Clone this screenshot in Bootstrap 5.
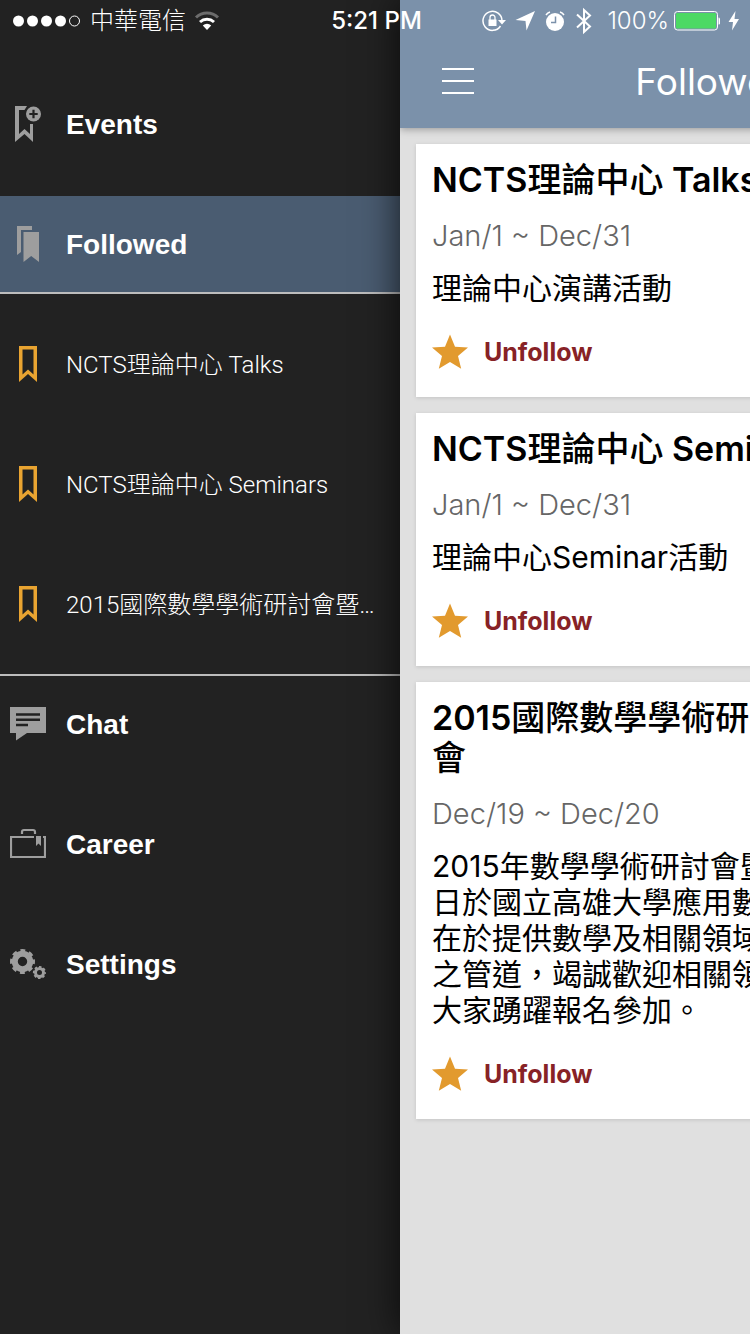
<!DOCTYPE html>
<html lang="zh-Hant">
<head>
<meta charset="utf-8">
<meta name="viewport" content="width=device-width, initial-scale=1">
<title>Followed Events</title>
<link href="https://cdn.jsdelivr.net/npm/bootstrap@5.3.0/dist/css/bootstrap.min.css" rel="stylesheet">
<style>
  body { font-family: Inter, "Noto Sans CJK TC", sans-serif; background: #222; }
  svg { display: block; flex: none; }
  .status-bar { height: 42px; font-size: 24px; line-height: 42px; padding: 0 9px 0 12px; z-index: 5; }
  .status-side { flex: 1 1 0; font-weight: 300; }
  .status-bar time { font-weight: 500; }
  .charge-level { margin: 0 5px 0 13px; }
  .side-menu { width: 400px; padding-top: 76px; }
  .menu-row { height: 96px; padding: 0 16px 0 10px; gap: 20px; color: #fff; text-decoration: none; }
  .menu-row span { padding-top: 2px; }
  .menu-main { font: 700 28px "Liberation Sans", sans-serif; }
  .menu-sub { font-family: Roboto, "Noto Sans CJK TC", sans-serif; font-size: 24px; font-weight: 300; }
  .menu-row.active { background: #4a5c71; }
  .menu-row svg { color: #9e9e9e; }
  .menu-sub svg { color: #e9a431; }
  .menu-gap { gap: 24px; }
  .followed-list { border-top: 2px solid #bdbdbd; border-bottom: 2px solid #bdbdbd; padding: 22px 0; }
  .main-pane { min-width: 0; background: #e0e0e0; box-shadow: 0 0 36px rgba(0,0,0,.75); }
  .pane-inner { width: 100vw; }
  .top-bar { height: 128px; padding: 57px 32px 0; background: #7b91aa; box-shadow: 0 1px 8px rgba(0,0,0,.35); }
  .top-bar h1 { font-size: 37px; line-height: 50px; font-weight: 400; }
  .menu-btn { width: 52px; height: 48px; padding: 0 10px; }
  .event-card { border: 0; border-radius: 0; padding: 16px 16px 27px; box-shadow: 0 1px 4px rgba(0,0,0,.13); color: #000; }
  .event-card h2 { font-family: Inter, "Noto Sans CJK TC Medium", "Noto Sans CJK TC", sans-serif; font-size: 34px; line-height: 40px; font-weight: 600; margin: 0 0 18px; }
  .event-card .when { font-size: 29px; line-height: 36px; font-weight: 300; color: #666; margin: 0 0 16px; }
  .event-card .about { font-size: 30px; line-height: 36px; margin: 0 0 28px; }
  .follow-btn { font-size: 25px; line-height: 36px; font-weight: 700; color: #872226; gap: 16px; }
</style>
</head>
<body>
<svg width="0" height="0" class="position-absolute" aria-hidden="true">
  <symbol id="bookmark" viewBox="0 0 36 36"><path fill="currentColor" fill-rule="evenodd" d="M9 0h18v36l-9-8-9 8zM12.500 3.500v25l5.500-5 5.500 5v-25z"/></symbol>
  <symbol id="star" viewBox="0 0 36 36"><path fill="#e29a2e" d="M18 .5l5 12.300 13 .8-10 8.500 3.200 12.700L18 28l-11.200 6.800L10 22.100 0 13.600l13-.8z"/></symbol>
</svg>

<div class="status-bar position-absolute top-0 start-0 w-100 d-flex align-items-center text-white">
  <div class="status-side d-flex align-items-center">
    <svg width="70" height="14" viewBox="0 0 70 14"><g fill="#fff"><circle cx="6.500" cy="7" r="5.500"/><circle cx="20.500" cy="7" r="5.500"/><circle cx="34.500" cy="7" r="5.500"/><circle cx="48.500" cy="7" r="5.500"/></g><circle cx="62.500" cy="7" r="5" fill="none" stroke="#fff"/></svg>
    <span class="ms-2">中華電信</span>
    <svg class="ms-2" width="26" height="20" viewBox="1 0 26 20" fill="none" stroke="#fff" stroke-width="3"><path d="M3 6.500a16 16 0 0 1 22 0" stroke="#6c6c6c"/><path d="M7 11a10.500 10.500 0 0 1 14 0"/><path d="M9.800 14.400a6 6 0 0 1 8.400 0L14 19z" fill="#fff" stroke="none"/></svg>
  </div>
  <time>5:21 PM</time>
  <div class="status-side d-flex align-items-center justify-content-end">
    <svg width="24" height="22" viewBox="0 0 24 22"><path d="M18.500 16a9.500 9.500 0 1 1 1.500-5" fill="none" stroke="#fff" stroke-width="1.500"/><path fill="#fff" d="M16 10h8l-4 4.500zM6.500 9.500h8v6.500h-8z"/><path d="M8 10V7.500a2.500 2.500 0 0 1 5 0V10" fill="none" stroke="#fff" stroke-width="1.300"/></svg>
    <svg class="ms-2 me-2" width="22" height="20" viewBox="0 0 22 20"><path fill="#fff" d="M21 0L12.500 19.500l-1-9.500L1.500 9z"/></svg>
    <svg width="22" height="22" viewBox="0 0 22 22"><circle cx="11" cy="12" r="9" fill="#fff"/><path d="M2 5a8 8 0 0 1 4-3M20 5a8 8 0 0 0-4-3" fill="none" stroke="#fff" stroke-width="1.500"/><path d="M11.500 6.500v6H7" fill="none" stroke="#7b91aa" stroke-width="1.500"/></svg>
    <svg class="ms-2" width="20" height="28" viewBox="0 0 20 28"><path d="M3 7.500l13 12-6 5.500V3l6 5.500-13 12" fill="none" stroke="#fff" stroke-width="2"/></svg>
    <span class="charge-level">100%</span>
    <svg width="46" height="20" viewBox="0 0 46 20"><rect x=".5" y=".5" width="43" height="18.500" rx="3" fill="none" stroke="#fff"/><rect x="2" y="2" width="40" height="15.500" rx="1" fill="#4cd964"/><path fill="#fff" d="M44.500 6.500q2 0 2 3.500t-2 3.500z"/></svg>
    <svg class="ms-2" width="13" height="20" viewBox="1 0 13 20"><path fill="#fff" d="M8.500 0L1.500 11h4.500L5 19.500 12 8H7.500z"/></svg>
  </div>
</div>

<div class="d-flex min-vh-100 overflow-hidden">
  <nav class="side-menu flex-shrink-0">
    <a href="#" class="menu-row menu-main d-flex align-items-center mb-4">
      <svg width="36" height="36" viewBox="0 0 36 36"><path fill="currentColor" d="M5 0h12l-2.500 4H9v24l5.500-5 5.500 5V18h3v18l-8.500-8L5 36z"/><circle cx="23.500" cy="8" r="7.500" fill="currentColor"/><path d="M23.500 3.800v8.400M19.300 8h8.400" stroke="#222" stroke-width="2.200"/></svg>
      <span>Events</span>
    </a>
    <a href="#" class="menu-row menu-main active d-flex align-items-center">
      <svg width="36" height="36" viewBox="0 0 36 36"><path fill="currentColor" d="M7 0h15v4H11v22l-4 3zM13.500 6H29v30l-7.800-6-7.700 6z"/></svg>
      <span>Followed</span>
    </a>
    <div class="followed-list d-flex flex-column menu-gap">
      <a href="#" class="menu-row menu-sub d-flex align-items-center"><svg width="36" height="36"><use href="#bookmark"/></svg><span>NCTS理論中心 Talks</span></a>
      <a href="#" class="menu-row menu-sub d-flex align-items-center"><svg width="36" height="36"><use href="#bookmark"/></svg><span>NCTS理論中心 Seminars</span></a>
      <a href="#" class="menu-row menu-sub d-flex align-items-center"><svg width="36" height="36"><use href="#bookmark"/></svg><span class="text-nowrap">2015國際數學學術研討會暨…</span></a>
    </div>
    <div class="d-flex flex-column menu-gap">
      <a href="#" class="menu-row menu-main d-flex align-items-center">
        <svg width="36" height="36" viewBox="0 0 36 36"><path fill="currentColor" d="M0 1h36v26H17L6 34.500V27H0z"/><path d="M6 8.500h24M6 13.700h24M6 19h12" stroke="#222" stroke-width="2.400"/></svg>
        <span>Chat</span>
      </a>
      <a href="#" class="menu-row menu-main d-flex align-items-center">
        <svg width="36" height="36" viewBox="0 0 36 36"><path d="M24 11H1v20h34V10M33 11h2M12 8V6q0-2 2-2h9q2 0 2 2v2" fill="none" stroke="currentColor" stroke-width="2.200"/><path d="M26 10h5v10l-2.500-2.500L26 20z" fill="currentColor"/></svg>
        <span>Career</span>
      </a>
      <a href="#" class="menu-row menu-main d-flex align-items-center">
        <svg width="36" height="36" viewBox="0 0 36 36" fill="none" stroke="currentColor"><circle cx="12.500" cy="15.500" r="7.700" stroke-width="6"/><circle cx="12.500" cy="15.500" r="11" stroke-width="3" stroke-dasharray="4.800 3.840" stroke-dashoffset="2.400"/><circle cx="29.500" cy="26.500" r="4" stroke-width="3"/><circle cx="29.500" cy="26.500" r="5.700" stroke-width="1.800" stroke-dasharray="2.500 1.977" stroke-dashoffset="1.250"/></svg>
        <span>Settings</span>
      </a>
    </div>
  </nav>

  <main class="main-pane flex-grow-1 overflow-hidden">
    <div class="pane-inner">
      <header class="top-bar d-flex align-items-start position-relative text-white">
        <button type="button" class="menu-btn btn border-0" aria-label="Menu">
          <svg width="32" height="26" viewBox="0 0 32 26"><path d="M0 1h32M0 13h32M0 25h32" stroke="#fff" stroke-width="2"/></svg>
        </button>
        <h1 class="flex-grow-1 text-center m-0 me-5">Followed Events</h1>
      </header>
      <div class="d-flex flex-column gap-3 p-3">
        <article class="event-card card">
          <h2>NCTS理論中心 Talks</h2>
          <p class="when">Jan/1 ~ Dec/31</p>
          <p class="about">理論中心演講活動</p>
          <button type="button" class="follow-btn btn border-0 p-0 d-flex align-items-center align-self-start"><svg width="36" height="36"><use href="#star"/></svg>Unfollow</button>
        </article>
        <article class="event-card card">
          <h2>NCTS理論中心 Seminars</h2>
          <p class="when">Jan/1 ~ Dec/31</p>
          <p class="about">理論中心Seminar活動</p>
          <button type="button" class="follow-btn btn border-0 p-0 d-flex align-items-center align-self-start"><svg width="36" height="36"><use href="#star"/></svg>Unfollow</button>
        </article>
        <article class="event-card card">
          <h2>2015國際數學學術研討會暨中華民國數學年會</h2>
          <p class="when">Dec/19 ~ Dec/20</p>
          <p class="about">2015年數學學術研討會暨<br>日於國立高雄大學應用數<br>在於提供數學及相關領域<br>之管道，竭誠歡迎相關領<br>大家踴躍報名參加。</p>
          <button type="button" class="follow-btn btn border-0 p-0 d-flex align-items-center align-self-start"><svg width="36" height="36"><use href="#star"/></svg>Unfollow</button>
        </article>
      </div>
    </div>
  </main>
</div>
<script src="https://cdn.jsdelivr.net/npm/bootstrap@5.3.0/dist/js/bootstrap.bundle.min.js"></script>
</body>
</html>
